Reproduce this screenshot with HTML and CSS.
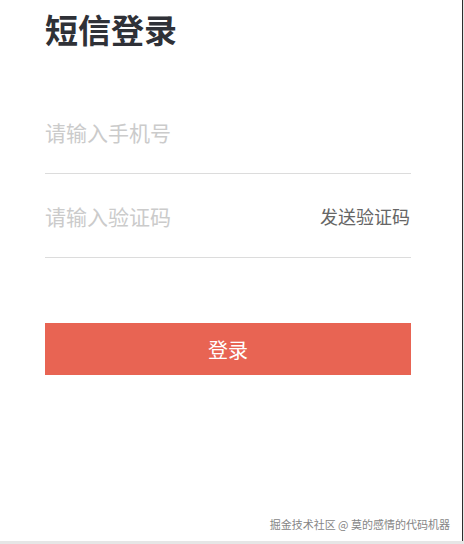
FILE: index.html
```html
<!DOCTYPE html>
<html lang="zh-CN">
<head>
    <meta charset="UTF-8">
    <meta name="viewport" content="width=device-width, initial-scale=1.0">
    <title>短信登录</title>
    <link rel="stylesheet" href="styles.css">
</head>
<body>

    <div class="page">
        <div class="container">
            <h1>短信登录</h1>

            <div class="field">
                <input type="tel" id="phone" placeholder="请输入手机号">
            </div>
            <div class="field">
                <input type="text" id="code" placeholder="请输入验证码">
                <span class="send-code">发送验证码</span>
            </div>

            <button class="login-btn">登录</button>
        </div>

        <div class="watermark">掘金技术社区 @ 莫的感情的代码机器</div>
    </div>

</body>
</html>
```

FILE: styles.css
```css
body {
    margin: 0;
    padding: 0;
    background: #e6e6e6; /* strip under the page */
    font-family: "Noto Sans CJK SC", "Noto Sans", sans-serif;
}
.page {
    position: relative;
    width: 462px;
    height: 541px;
    background: #fff;
    border-right: 1px solid #2e2e2e;
}
.container {
    padding: 13px 51px 0 45px;
}
h1 {
    margin: 0;
    font-size: 33px;
    line-height: 32px;
    font-weight: 700;
    color: #2f3137;
}
.field {
    display: flex;
    align-items: center;
    height: 83px;
    border-bottom: 1px solid #dcdcdc;
}
.field:first-of-type {
    margin-top: 45px;
}
.field input {
    flex: 1;
    min-width: 0;
    border: none;
    outline: none;
    padding: 0;
    margin: 0;
    font-family: inherit;
    font-size: 21px;
    line-height: 20px;
    color: #333;
    background: transparent;
}
.field input::placeholder {
    color: #cbcbcb;
}
.send-code {
    font-size: 18px;
    line-height: 20px;
    color: #666;
    margin-right: 1px;
}
.login-btn {
    display: block;
    width: 100%;
    height: 52px;
    margin-top: 65px;
    border: none;
    border-radius: 0;
    background: #e86453;
    color: #fff;
    font-family: inherit;
    font-size: 20px;
    cursor: pointer;
}
.watermark {
    position: absolute;
    right: 12px;
    bottom: 10px;
    font-size: 11px;
    line-height: 14px;
    color: #858585;
    text-shadow: 0 0 1px #fff;
}
```
